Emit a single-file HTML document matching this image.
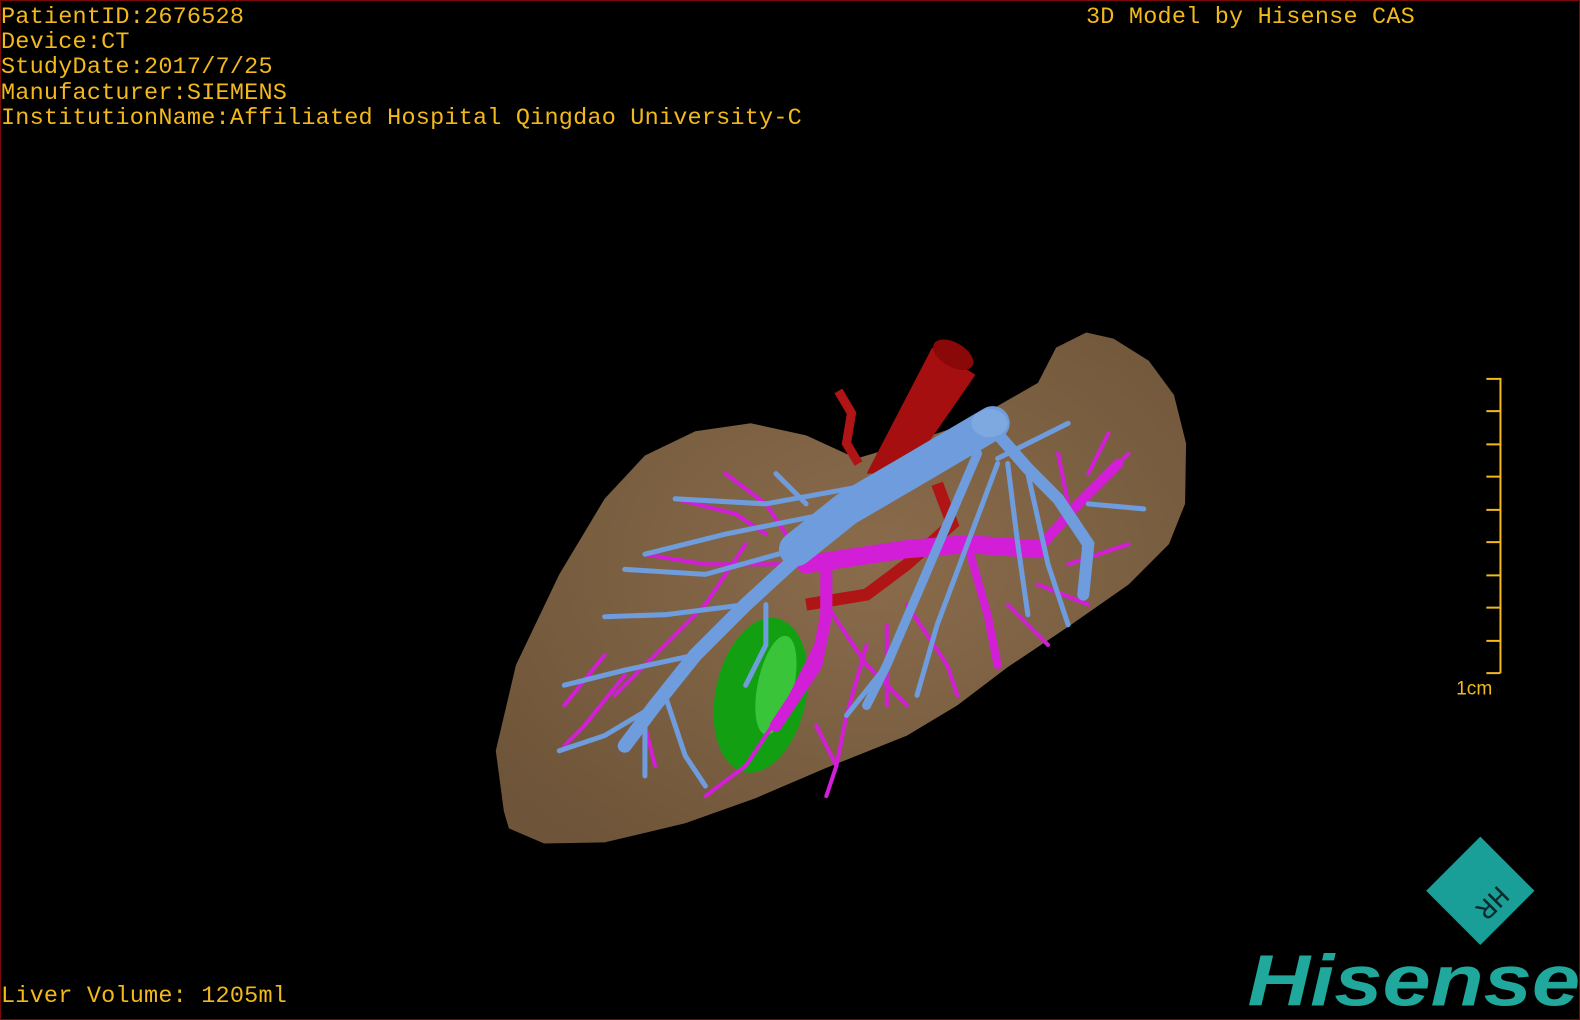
<!DOCTYPE html>
<html><head><meta charset="utf-8"><style>
html,body{margin:0;padding:0;background:#000;}
body{width:1580px;height:1020px;position:relative;overflow:hidden;}
.frame{position:absolute;left:0;top:0;width:1578px;height:1018px;border:1px solid #7a0a0a;}
.t{position:absolute;color:#f2b81c;font-family:"Liberation Mono",monospace;font-size:23.5px;line-height:25.2px;white-space:pre;letter-spacing:0.2px;}
svg{position:absolute;left:0;top:0;}
</style></head><body>
<svg width="1580" height="1020" viewBox="0 0 1580 1020">
<defs>
<radialGradient id="lv" cx="0.55" cy="0.45" r="0.7"><stop offset="0" stop-color="#8a6c4c"/><stop offset="1" stop-color="#6e5438"/></radialGradient>
</defs>
<g transform="scale(1.0077)">
<path d="M500,805 L492,745 L512,660 L555,570 L600,495 L640,452 L690,428 L745,420 L800,432 L850,455 L900,440 L960,420 L1030,380 L1048,345 L1078,330 L1105,336 L1140,358 L1165,392 L1177,440 L1176,500 L1160,540 L1120,580 L1060,622 L1000,662 L950,700 L900,730 L820,762 L750,792 L680,817 L600,836 L540,837 L505,822 Z" fill="url(#lv)"/>
<path d="M925,345 L968,372 L900,470 L860,470 Z" fill="#a50f0f"/>
<ellipse cx="946" cy="352" rx="22" ry="12" fill="#8a0808" transform="rotate(30 946 352)"/>
<path d="M832,388 L845,410 L840,440 L852,460" stroke="#b01515" stroke-width="9" fill="none"/>
<path d="M930,480 L945,520 L900,560 L860,590 L800,600" stroke="#b01515" stroke-width="12" fill="none"/>
<ellipse cx="755" cy="690" rx="45" ry="78" fill="#12a012" transform="rotate(12 755 690)"/>
<ellipse cx="770" cy="680" rx="18" ry="50" fill="#3ac43a" transform="rotate(12 770 680)"/>
<g stroke="#d21ed6" fill="none" stroke-linecap="round">
<path d="M800,560 L900,545 L960,540 L1030,545" stroke-width="18"/>
<path d="M820,560 L820,610 L810,660 L770,720" stroke-width="12"/>
<path d="M1030,545 L1070,500 L1110,460" stroke-width="10"/>
<path d="M960,540 L980,610 L990,660" stroke-width="8"/>
<g stroke-width="4">
<path d="M720,470 L760,500 L780,530 L800,560"/><path d="M670,495 L730,510 L760,530"/>
<path d="M640,550 L700,560 L750,560 L800,560"/><path d="M740,540 L700,600 L650,650 L610,690"/>
<path d="M620,670 L580,720 L560,740"/><path d="M600,650 L560,700"/><path d="M820,600 L860,660 L900,700"/>
<path d="M820,620 L780,700 L740,760 L700,790"/><path d="M860,640 L840,710 L830,760"/>
<path d="M1060,510 L1120,450"/><path d="M1060,560 L1120,540"/><path d="M1030,580 L1080,600"/>
<path d="M1000,600 L1040,640"/><path d="M900,600 L940,660 L950,690"/><path d="M880,620 L880,700"/>
<path d="M650,760 L640,720 L660,680"/><path d="M810,720 L830,760 L820,790"/>
<path d="M1050,450 L1060,500"/><path d="M1100,430 L1080,470"/>
</g></g>
<g stroke="#6e9cdc" fill="none" stroke-linecap="round">
<path d="M985,420 L900,470 L840,505 L790,545" stroke-width="34"/>
<path d="M800,545 L740,600 L690,650 L650,700 L620,740" stroke-width="14"/>
<path d="M985,425 L1020,465 L1050,495 L1080,540 L1075,590" stroke-width="12"/>
<path d="M970,450 L940,520 L910,590 L880,660 L860,700" stroke-width="9"/>
<g stroke-width="5">
<path d="M870,480 L760,500 L670,495"/><path d="M820,510 L720,530 L640,550"/><path d="M790,545 L700,570 L620,565"/>
<path d="M740,600 L660,610 L600,612"/><path d="M690,650 L620,665 L560,680"/><path d="M650,700 L600,730 L555,745"/>
<path d="M660,690 L680,750 L700,780"/><path d="M640,720 L640,770"/><path d="M990,460 L960,540 L930,620 L910,690"/>
<path d="M1000,460 L1010,540 L1020,610"/><path d="M1020,470 L1040,560 L1060,620"/><path d="M1080,500 L1135,505"/>
<path d="M770,470 L800,500"/><path d="M760,600 L760,640 L740,680"/><path d="M880,660 L840,710"/>
<path d="M990,455 L1060,420"/>
</g></g>
<ellipse cx="982" cy="420" rx="18" ry="14" fill="#7ea8e0"/>
<g stroke="#f2b81c" stroke-width="2" fill="none">
<path d="M1489,375 V668"/>
<path d="M1475,376 H1489 M1475,408 H1489 M1475,441 H1489 M1475,473 H1489 M1475,506 H1489 M1475,538 H1489 M1475,571 H1489 M1475,603 H1489 M1475,636 H1489 M1475,668 H1489"/>
</g>
<text x="1445" y="689" fill="#f2b81c" font-family="Liberation Sans, sans-serif" font-size="19">1cm</text>
<g transform="translate(1469,884) rotate(45)">
<rect x="-38" y="-38" width="76" height="76" fill="#1a9e98"/>
<text x="0" y="-8" transform="rotate(90)" fill="#0d2a2a" font-family="Liberation Mono,monospace" font-size="28" text-anchor="middle">HR</text>
</g>
<text x="1238" y="998" fill="#1fa89b" font-family="Liberation Sans, sans-serif" font-weight="bold" font-style="italic" font-size="72" textLength="330" lengthAdjust="spacingAndGlyphs">Hisense</text>
</g>
</svg>
<div class="frame"></div>
<div class="t" style="left:1px;top:5px">PatientID:2676528
Device:CT
StudyDate:2017/7/25
Manufacturer:SIEMENS
InstitutionName:Affiliated Hospital Qingdao University-C</div>
<div class="t" style="left:1086px;top:5px">3D Model by Hisense CAS</div>
<div class="t" style="left:1px;top:984px">Liver Volume: 1205ml</div>
</body></html>
